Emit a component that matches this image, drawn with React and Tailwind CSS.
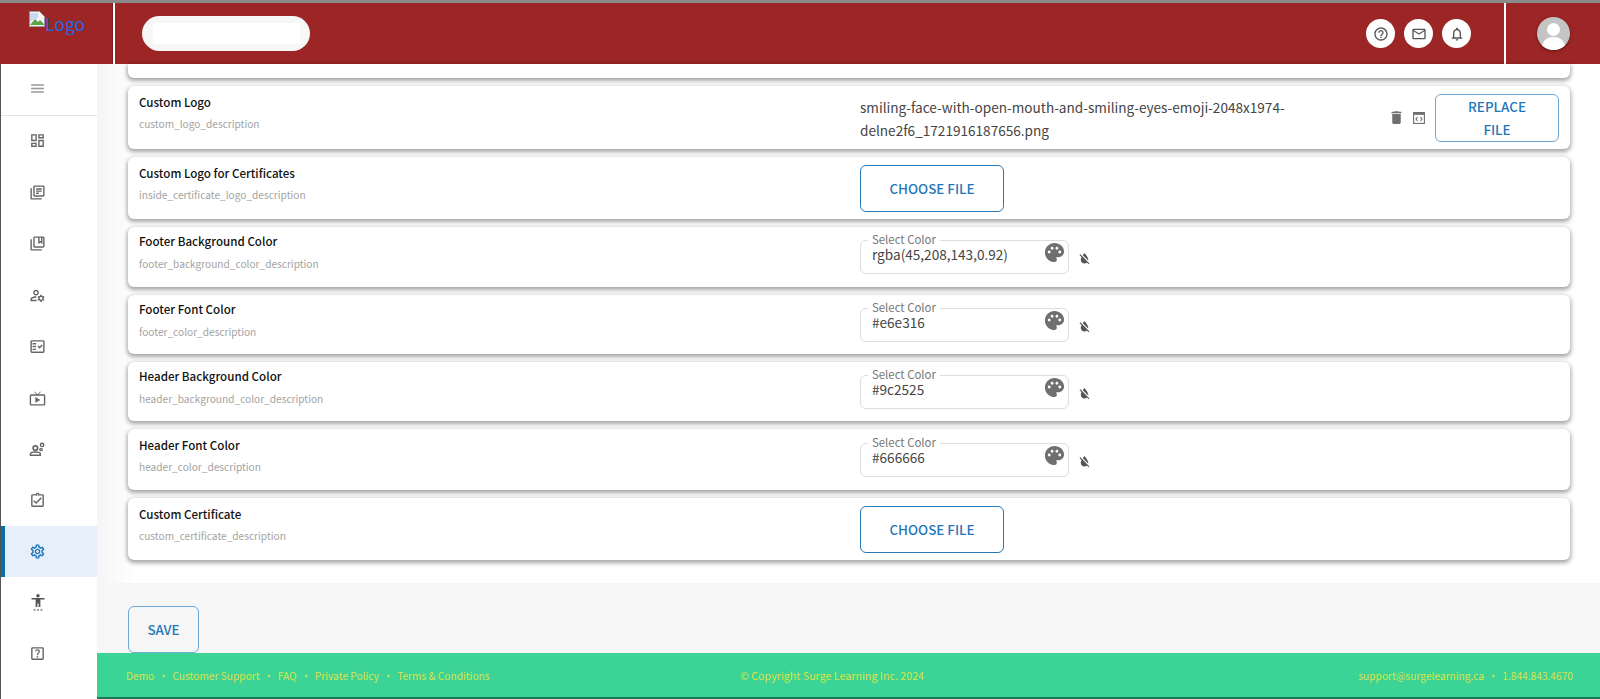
import React from "react";
import {
  MdOutlineDashboard, MdOutlineLibraryBooks, MdOutlineCollectionsBookmark, MdOutlineManageAccounts,
  MdOutlineFactCheck, MdOutlineLiveTv, MdOutlineAssignmentTurnedIn, MdOutlineSettings,
  MdOutlineHelpCenter, MdOutlineHelpOutline, MdOutlineMail, MdOutlineNotifications,
  MdDelete, MdPalette, MdFormatColorReset, MdMenu,
} from "react-icons/md";

function PersonGears({ className }) {
  return (
    <svg viewBox="0 0 24 24" className={className} fill="none" stroke="currentColor">
      <circle cx="9" cy="10" r="3.2" strokeWidth="2.4" />
      <path d="M2 20v-1.5c0-1.8 3.2-3 7-3s7 1.2 7 3V20z" strokeWidth="2" />
      <circle cx="18.5" cy="5.5" r="2.4" strokeWidth="2" />
      <circle cx="17" cy="12" r="1.7" strokeWidth="1.8" />
    </svg>
  );
}

function AccessPerson({ className }) {
  return (
    <svg viewBox="0 0 16 18" className={className} fill="currentColor">
      <circle cx="8" cy="1.7" r="1.7" />
      <path d="M1.5 4h13v1.4H10.4V13H8.6V9.5H7.4V13H5.6V5.4H1.5z" />
      <rect x="3.6" y="15.4" width="1.8" height="1.2" />
      <rect x="7.1" y="15.4" width="1.8" height="1.2" />
      <rect x="10.6" y="15.4" width="1.8" height="1.2" />
    </svg>
  );
}

function CodeFile({ className }) {
  return (
    <svg viewBox="0 0 12 12" className={className} fill="none" stroke="currentColor">
      <rect x="0.6" y="0.6" width="10.8" height="10.8" strokeWidth="1.1" />
      <rect x="0.6" y="0.6" width="10.8" height="2" fill="currentColor" strokeWidth="0.6" />
      <path d="M4.6 5.2 3 7l1.6 1.8M7.4 5.2 9 7 7.4 8.8" strokeWidth="1.1" />
    </svg>
  );
}

const nav = [
  [MdOutlineDashboard, "h-[50px] pb-[2px]"],
  [MdOutlineLibraryBooks, "h-[52px]"],
  [MdOutlineCollectionsBookmark, "h-[51px]"],
  [MdOutlineManageAccounts, "h-[52px]"],
  [MdOutlineFactCheck, "h-[51px]"],
  [MdOutlineLiveTv, "h-[52px]"],
  [PersonGears, "h-[51px]"],
  [MdOutlineAssignmentTurnedIn, "h-[51px]"],
];

function Row({ title, desc, h, tight, children }) {
  return (
    <div className={`flex ${h} shrink-0 rounded-md bg-white shadow-[0_2px_4px_1px_rgba(0,0,0,0.35)]`}>
      <div className={`w-[732px] shrink-0 pl-[11px] ${tight ? "pt-[4px]" : "pt-[6px]"}`}>
        <div className="text-[11.6px] leading-[20px] font-medium text-[#111]">{title}</div>
        <div className={`${tight ? "mt-[3px]" : "mt-[2px]"} text-[10.15px] leading-[20px] text-[#a3a3a3]`}>{desc}</div>
      </div>
      <div className="flex flex-1 items-center">{children}</div>
    </div>
  );
}

function ChooseFile() {
  return (
    <button className="h-[47px] w-[144px] rounded-md border border-[#2a7ab8] bg-white text-[13.4px] font-medium text-[#1f76b8]">CHOOSE FILE</button>
  );
}

function ColorField({ value }) {
  return (
    <div className="flex items-center">
      <div className="relative h-[34px] w-[209px] rounded-md border border-[#dddddd] bg-white pl-[11px] pt-[1px] text-[13.6px] leading-[24px] text-[#444]">
        <span className="absolute left-[7px] top-[-10px] bg-white px-[4px] text-[11.4px] leading-[16px] text-[#777]">Select Color</span>
        {value}
        <MdPalette className="absolute right-[2px] top-0 text-[23px] text-[#6f6f6f]" />
      </div>
      <MdFormatColorReset className="ml-[8px] mt-[3px] text-[15px] text-[#555]" />
    </div>
  );
}

export default function App() {
  return (
    <div className="flex h-[699px] w-[1600px] flex-col overflow-hidden border-t-[3px] border-t-[#8a8a8a] bg-white font-['Noto_Sans_CJK_SC','Noto_Sans',sans-serif]">
      <header className="flex h-[61px] shrink-0 items-stretch bg-[#9c2525]">
        <div className="flex w-[113px] shrink-0 items-start border-r border-[#7d1d1d] pl-[29px] pt-[8px]">
          <svg width="16" height="16" viewBox="0 0 16 16" className="shrink-0">
            <path d="M.5.5h10l5 5v10H.5z" fill="#f4f4f4" stroke="#9a9a9a" />
            <path d="M1 14l5-6 3 3 2-2 4 4v1H1z" fill="#5aa34a" />
            <path d="M1 2h8v5L5 8 1 11z" fill="#c7d7ef" />
          </svg>
          <span className="mt-[1px] text-[17.5px] leading-[24px] text-[#2269e6]">Logo</span>
        </div>
        <div className="w-[2px] shrink-0 bg-white" />
        <div className="flex flex-1 items-center pl-[27px]">
          <div className="flex h-[35px] w-[168px] items-center justify-center rounded-full bg-[#f7f7f7]">
            <div className="h-[21px] w-[147px] bg-white" />
          </div>
        </div>
        <div className="flex items-center gap-[9px] pr-[33px]">
          {[MdOutlineHelpOutline, MdOutlineMail, MdOutlineNotifications].map((I, i) => (
            <div key={i} className="flex h-[29px] w-[29px] items-center justify-center rounded-full bg-white">
              <I className="h-[16px] w-[16px] text-[#555]" />
            </div>
          ))}
        </div>
        <div className="w-[2px] shrink-0 bg-white" />
        <div className="flex w-[94px] shrink-0 items-center justify-center">
          <div className="relative h-[33px] w-[33px] overflow-hidden rounded-full bg-[#c4c4c4] shadow-[0_1px_3px_rgba(0,0,0,0.4)]">
            <div className="absolute left-[10px] top-[6px] h-[13px] w-[13px] rounded-full bg-white" />
            <div className="absolute left-[5px] top-[20px] h-[20px] w-[23px] rounded-full bg-white" />
          </div>
        </div>
      </header>
      <div className="flex min-h-0 flex-1">
        <aside className="flex w-[97px] shrink-0 flex-col border-l border-l-[#555] bg-white">
          <div className="flex h-[52px] shrink-0 items-center border-b border-[#e5e5e5] pb-[2px] pl-[28px]">
            <MdMenu className="h-[17px] w-[17px] text-[#999]" />
          </div>
          {nav.map(([I, h], i) => (
            <div key={i} className={`flex shrink-0 items-center pl-[28px] ${h}`}>
              <I className="h-[17px] w-[17px] text-[#666]" />
            </div>
          ))}
          <div className="flex h-[51px] shrink-0 items-center border-l-[4px] border-l-[#0a6ea8] bg-[#e7f0fa] pl-[24px]">
            <MdOutlineSettings className="h-[17px] w-[17px] text-[#1f76b8]" />
          </div>
          <div className="flex h-[51px] shrink-0 items-center pl-[29px]">
            <AccessPerson className="h-[18px] w-[16px] text-[#555]" />
          </div>
          <div className="flex h-[51px] shrink-0 items-center pl-[28px]">
            <MdOutlineHelpCenter className="h-[17px] w-[17px] text-[#666]" />
          </div>
        </aside>
        <main className="flex min-w-0 flex-1 flex-col">
          <div className="flex h-[519px] shrink-0 flex-col gap-[8px] bg-gradient-to-r from-[#f5f5f5] to-white to-[40px] pl-[31px] pr-[30px]">
            <div className="h-[14px] shrink-0 rounded-b-md bg-white shadow-[0_2px_4px_1px_rgba(0,0,0,0.35)]" />
            <Row title="Custom Logo" desc="custom_logo_description" h="h-[63px]">
              <div className="w-[528px] shrink-0 pt-[2px] text-[13.6px] leading-[23px] text-[#444]">
                smiling-face-with-open-mouth-and-smiling-eyes-emoji-2048x1974-delne2f6_1721916187656.png
              </div>
              <MdDelete className="shrink-0 text-[17px] text-[#6f6f6f]" />
              <CodeFile className="ml-[8px] h-[12px] w-[12px] shrink-0 text-[#6f6f6f]" />
              <button className="ml-[10px] h-[48px] w-[124px] shrink-0 rounded-md border border-[#6ea6d4] bg-white px-[30px] text-[13.4px] leading-[23px] font-medium text-[#1f76b8]">REPLACE FILE</button>
            </Row>
            <Row title="Custom Logo for Certificates" desc="inside_certificate_logo_description" h="h-[62px]"><ChooseFile /></Row>
            <Row tight title="Footer Background Color" desc="footer_background_color_description" h="h-[60px]"><ColorField value="rgba(45,208,143,0.92)" /></Row>
            <Row tight title="Footer Font Color" desc="footer_color_description" h="h-[59px]"><ColorField value="#e6e316" /></Row>
            <Row tight title="Header Background Color" desc="header_background_color_description" h="h-[59px]"><ColorField value="#9c2525" /></Row>
            <Row title="Header Font Color" desc="header_color_description" h="h-[61px]"><ColorField value="#666666" /></Row>
            <Row title="Custom Certificate" desc="custom_certificate_description" h="h-[62px]"><ChooseFile /></Row>
          </div>
          <div className="flex flex-1 items-end bg-[#f6f6f6] pl-[31px]">
            <button className="h-[47px] w-[71px] rounded-md border border-[#6ea6d4] bg-[#f6f6f6] text-[13.4px] font-medium text-[#1f76b8]">SAVE</button>
          </div>
          <footer className="flex h-[46px] shrink-0 items-center border-b-2 border-b-[#1f7a56] bg-[#3bd396] pl-[29px] pr-[27px] pt-[2px] text-[10.2px] text-[#d9e34a]">
            <div className="flex w-[614px] shrink-0 gap-[4px]">
              <span>Demo</span><span>•</span><span>Customer Support</span><span>•</span><span>FAQ</span><span>•</span><span>Private Policy</span><span>•</span><span>Terms &amp; Conditions</span>
            </div>
            <div className="flex-1 text-[10.7px]">© Copyright Surge Learning Inc. 2024</div>
            <div className="flex justify-end gap-[4px]">
              <span>support@surgelearning.ca</span><span>•</span><span>1.844.843.4670</span>
            </div>
          </footer>
        </main>
      </div>
    </div>
  );
}
